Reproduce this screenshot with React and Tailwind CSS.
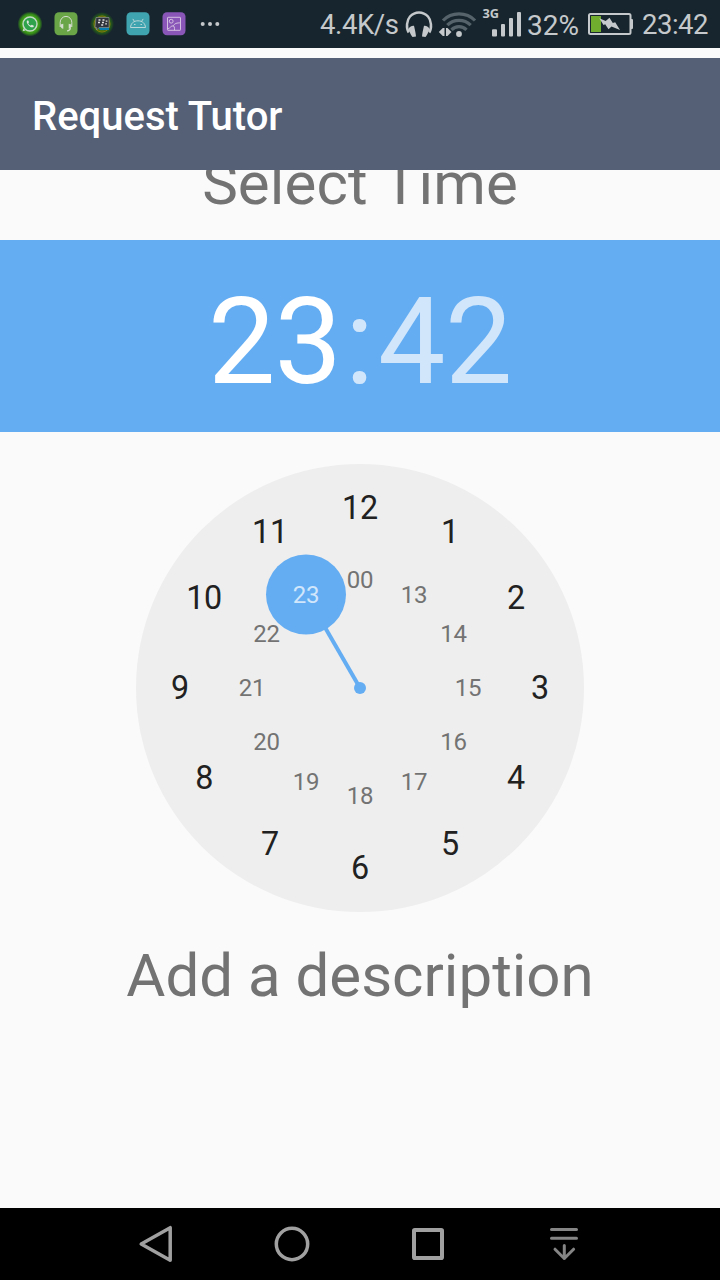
import React from 'react';

function NotificationIcons() {
  return (
    <svg className="h-12 w-[230px] shrink-0" viewBox="0 0 230 48" fill="none">
      <defs>
        <radialGradient id="glow">
          <stop offset="0.6" stopColor="#43a51a" />
          <stop offset="0.78" stopColor="#368d19" />
          <stop offset="1" stopColor="#17262e" />
        </radialGradient>
        <radialGradient id="dimGlow">
          <stop offset="0.5" stopColor="#52780b" />
          <stop offset="0.75" stopColor="#24591b" />
          <stop offset="1" stopColor="#17262e" />
        </radialGradient>
      </defs>
      <circle cx="30" cy="24" r="12.5" fill="url(#glow)" />
      <circle cx="30" cy="24" r="7" fill="#2fa34c" stroke="#c3d8c6" strokeWidth="1.4" />
      <path d="M23.4 28.2 22.6 31.3l3-.9" fill="#c3d8c6" />
      <path d="M27.2 20.6c-1.1 1.3-.2 3.2 1.5 4.8s3.4 2.6 4.9 1.5l.2-1.2-2-1-1 .9c-1.2-.4-2.1-1.3-2.6-2.4l.8-.9-.7-1.9z" fill="#dce5dc" />

      <rect x="54.5" y="12.3" width="23" height="23" rx="4.5" fill="#6aa548" />
      <path d="M60.2 27v-4.6a5.8 6 0 0 1 11.6 0V27" stroke="#d3dccd" strokeWidth="1" />
      <path d="M60.5 24.5l2.8-.8v5c-1.8 0-3.3-1.5-2.8-4.2ZM71.5 24.5l-2.8-.8v5c1.8 0 3.3-1.5 2.8-4.2Z" fill="#d3dccd" />
      <path d="M70.500 28.200c-.3 1.800-1.500 2.600-3.500 2.800" stroke="#d3dccd" strokeWidth="1.2" />

      <circle cx="102" cy="24" r="12" fill="url(#dimGlow)" />
      <circle cx="102" cy="24" r="8" stroke="#7e780c" strokeWidth="1" />
      <path d="M98 27h11v3h-9z" fill="#087bb0" />
      <path d="M96 17.5h13v10H99l-2.5 2.5v-2.5H95z" fill="#30323c" stroke="#8a908f" strokeWidth=".7" />
      <path d="M98.5 20h2M102.5 20h2M98 22.5h2M102 22.5h2M105.7 21.2h1.7M101.2 25h2M105.2 23.8h1.7" stroke="#e0e0e0" strokeWidth="1.3" />

      <rect x="126.5" y="12.3" width="23" height="23" rx="4.5" fill="#40a4b0" />
      <path d="M130.5 27.5c.3-4 3-6.7 7.5-6.700s7.200 2.700 7.500 6.700zM134.500 21.500l-1.700-2.600M141.500 21.500l1.700-2.600" stroke="#b9d7d8" strokeWidth="1" />
      <path d="M134 24.5h1.5M140.5 24.5h1.5" stroke="#b9d7d8" strokeWidth="1.2" />

      <rect x="162.5" y="12.3" width="23" height="23" rx="4.5" fill="#8a57b8" />
      <rect x="167.500" y="17.3" width="13" height="13" rx=".5" stroke="#d3bfe0" strokeWidth="1" />
      <circle cx="171.2" cy="21.2" r="1.9" stroke="#d3bfe0" />
      <path d="M168 28.8c2 0 2.5-3 4.500-3s2 1.500 2 4.500M173 26.500c1.500-3.500 4-3.500 7.500-3.700" stroke="#d3bfe0" />

      <g fill="#c5c9cb">
        <circle cx="202.7" cy="24" r="2" />
        <circle cx="210" cy="24" r="2" />
        <circle cx="217.3" cy="24" r="2" />
      </g>
    </svg>
  );
}

function ConnectivityIcons() {
  return (
    <svg className="h-12 w-[123px] shrink-0" viewBox="402 0 123 48" fill="none">
      <path d="M408.7 32.5C405.8 28 406.8 20 410 16.5c5-5.5 13-5.5 18 0 3.2 3.5 4.2 11.5 1.3 16" stroke="#c5c9cb" strokeWidth="2.5" />
      <path d="M408.5 29c.5-2 3-3.5 5.5-3.3.8 3.5 1.8 7.5 2 10.8l-3.5.4c-1.2-.8-2.7-4.3-4-7.9ZM429.5 29c-.5-2-3-3.5-5.5-3.3-.8 3.5-1.8 7.5-2 10.8l3.5.4c1.2-.8 2.7-4.3 4-7.9Z" fill="#c5c9cb" />
      <g stroke="#56636a" strokeWidth="3.2">
        <path d="M443 20.5c8.5-8.8 23.5-8.8 32 0" />
        <path d="M447.3 25.2c6.5-6.5 16.9-6.5 23.4 0" />
        <path d="M451.5 29.8c4-4.2 11-4.2 15 0" />
      </g>
      <circle cx="459" cy="34" r="2.9" fill="#c5c9cb" />
      <path d="M444.5 28v8h-1.7l-4-4 4-4zM446 28v8h1.500l4-4-4-4z" fill="#c5c9cb" />
      <path d="M492 30.3q0-1 1-1h3q1 0 1 1V35.5q0 1-1 1h-3q-1 0-1-1zM501 25q0-1 1-1h2q1 0 1 1v10.5q0 1-1 1h-2q-1 0-1-1zM509 19q0-1 1-1h2q1 0 1 1v16.5q0 1-1 1h-2q-1 0-1-1zM517 13q0-1 1-1h2q1 0 1 1v22.5q0 1-1 1h-2q-1 0-1-1z" fill="#c5c9cb" />
      <text x="482.5" y="17.8" fill="#c5c9cb" fontSize="12.8" fontWeight="700" fontFamily="'Open Sans', sans-serif">3G</text>
    </svg>
  );
}

function BatteryIcon() {
  return (
    <svg className="ml-[7px] h-12 w-[46px] shrink-0" viewBox="587 0 46 48" fill="none">
      <rect x="589" y="14" width="41.5" height="20" rx="1.5" stroke="#c5c9cb" strokeWidth="2" />
      <path d="M631 19h1q1 0 1 1v8q0 1-1 1h-1z" fill="#c5c9cb" />
      <path d="M591 16h10v16h-10z" fill="#70ad2f" />
      <path d="M599.3 18.3 605.7 21l3.8-3.3 3.300 5.300 2.400-.8L620 30l-8.500-3.400-3 2.700-3.300-5-1.700.8z" fill="#c5c9cb" />
    </svg>
  );
}

function StatusBar() {
  return (
    <div className="flex h-12 shrink-0 items-center whitespace-nowrap bg-[#17262e] text-[28px] leading-[48px] text-[#c5c9cb]">
      <NotificationIcons />
      <span className="ml-[90px] w-[82px] pt-[2px] text-[27.5px] tracking-[-0.4px]">4.4K/s</span>
      <ConnectivityIcons />
      <span className="ml-[2px] w-[53px] pt-[3px]">32%</span>
      <BatteryIcon />
      <span className="ml-[9px] pt-[2px] text-[27.5px] tracking-[-0.5px]">23:42</span>
    </div>
  );
}

const outerHours = ['12', '1', '2', '3', '4', '5', '6', '7', '8', '9', '10', '11'];
const innerHours = ['00', '13', '14', '15', '16', '17', '18', '19', '20', '21', '22', '23'];

function position(index, radius) {
  const angle = (index * Math.PI) / 6;
  return { x: 224 + radius * Math.sin(angle), y: 224 - radius * Math.cos(angle) };
}

function ClockFace({ selected }) {
  const hand = position(innerHours.indexOf(selected), 108);
  return (
    <svg className="mx-auto mt-8 block size-[448px] shrink-0" viewBox="0 0 448 448" textAnchor="middle">
      <circle cx="224" cy="224" r="224" fill="#eeeeee" />
      <path d={`M224 224L${hand.x} ${hand.y}`} stroke="#64adf3" strokeWidth="4" />
      <circle cx="224" cy="224" r="6" fill="#64adf3" />
      <circle cx={hand.x} cy={hand.y} r="40" fill="#64adf3" />
      {outerHours.map((hour, i) => {
        const { x, y } = position(i, 180);
        return <text key={hour} x={x} y={y + 11.3} fontSize="32.3" letterSpacing="-0.2" fill="#212121">{hour}</text>;
      })}
      {innerHours.map((hour, i) => {
        const { x, y } = position(i, 108);
        return (
          <text key={hour} x={x} y={y + 8.4} fontSize="24" letterSpacing="-0.3" fill={hour === selected ? '#d1e6fb' : '#737373'}>{hour}</text>
        );
      })}
    </svg>
  );
}

function NavigationBar() {
  return (
    <nav className="flex h-[72px] shrink-0 items-center justify-center gap-[96px] bg-black">
      <svg className="size-10" viewBox="0 0 40 40" fill="none" stroke="#a0a0a0" strokeWidth="3.5" strokeLinejoin="round">
        <path d="M34.2 3.7v32.6L5.2 20z" />
      </svg>
      <svg className="size-10" viewBox="0 0 40 40" fill="none" stroke="#a0a0a0" strokeWidth="3.5">
        <circle cx="20" cy="20" r="15.7" />
      </svg>
      <svg className="size-10" viewBox="0 0 40 40" fill="none" stroke="#a0a0a0" strokeWidth="4">
        <rect x="6" y="6" width="28" height="28" rx=".8" />
      </svg>
      <svg className="size-10" viewBox="0 0 40 40" fill="none" stroke="#858585" strokeWidth="3" strokeLinecap="round" strokeLinejoin="round">
        <path d="M7.5 5.5h25M7.5 14.3h25M20.3 21.5v13M11 25.2l9.3 9.3 9.3-9.3" />
      </svg>
    </nav>
  );
}

export default function App() {
  return (
    <div className="flex h-[1280px] w-[720px] flex-col overflow-hidden bg-[#fafafa] font-['Roboto',sans-serif]">
      <StatusBar />
      <header className="mt-[10px] flex h-[112px] shrink-0 items-center bg-[#555f76] px-8 pt-[6px]">
        <h1 className="text-[40px] font-medium leading-none text-white">Request Tutor</h1>
      </header>
      <main className="flex min-h-0 flex-1 flex-col overflow-hidden">
        <div className="flex h-[70px] shrink-0 items-end justify-center overflow-hidden">
          <h2 className="mb-[21px] text-[60px] leading-[70px] tracking-[0.1px] text-[#737373] [font-kerning:none]">Select Time</h2>
        </div>
        <div className="flex h-[192px] shrink-0 items-center justify-center gap-[4px] bg-[#64adf3] pt-[12px] text-[120px] leading-none text-[#d1e6fb]">
          <span className="tracking-[-1px] text-white">23</span>
          <span>:</span>
          <span className="tracking-[-0.5px]">42</span>
        </div>
        <ClockFace selected="23" />
        <h2 className="mt-[29px] text-center text-[60px] leading-[70px] text-[#737373]">Add a description</h2>
      </main>
      <NavigationBar />
    </div>
  );
}
